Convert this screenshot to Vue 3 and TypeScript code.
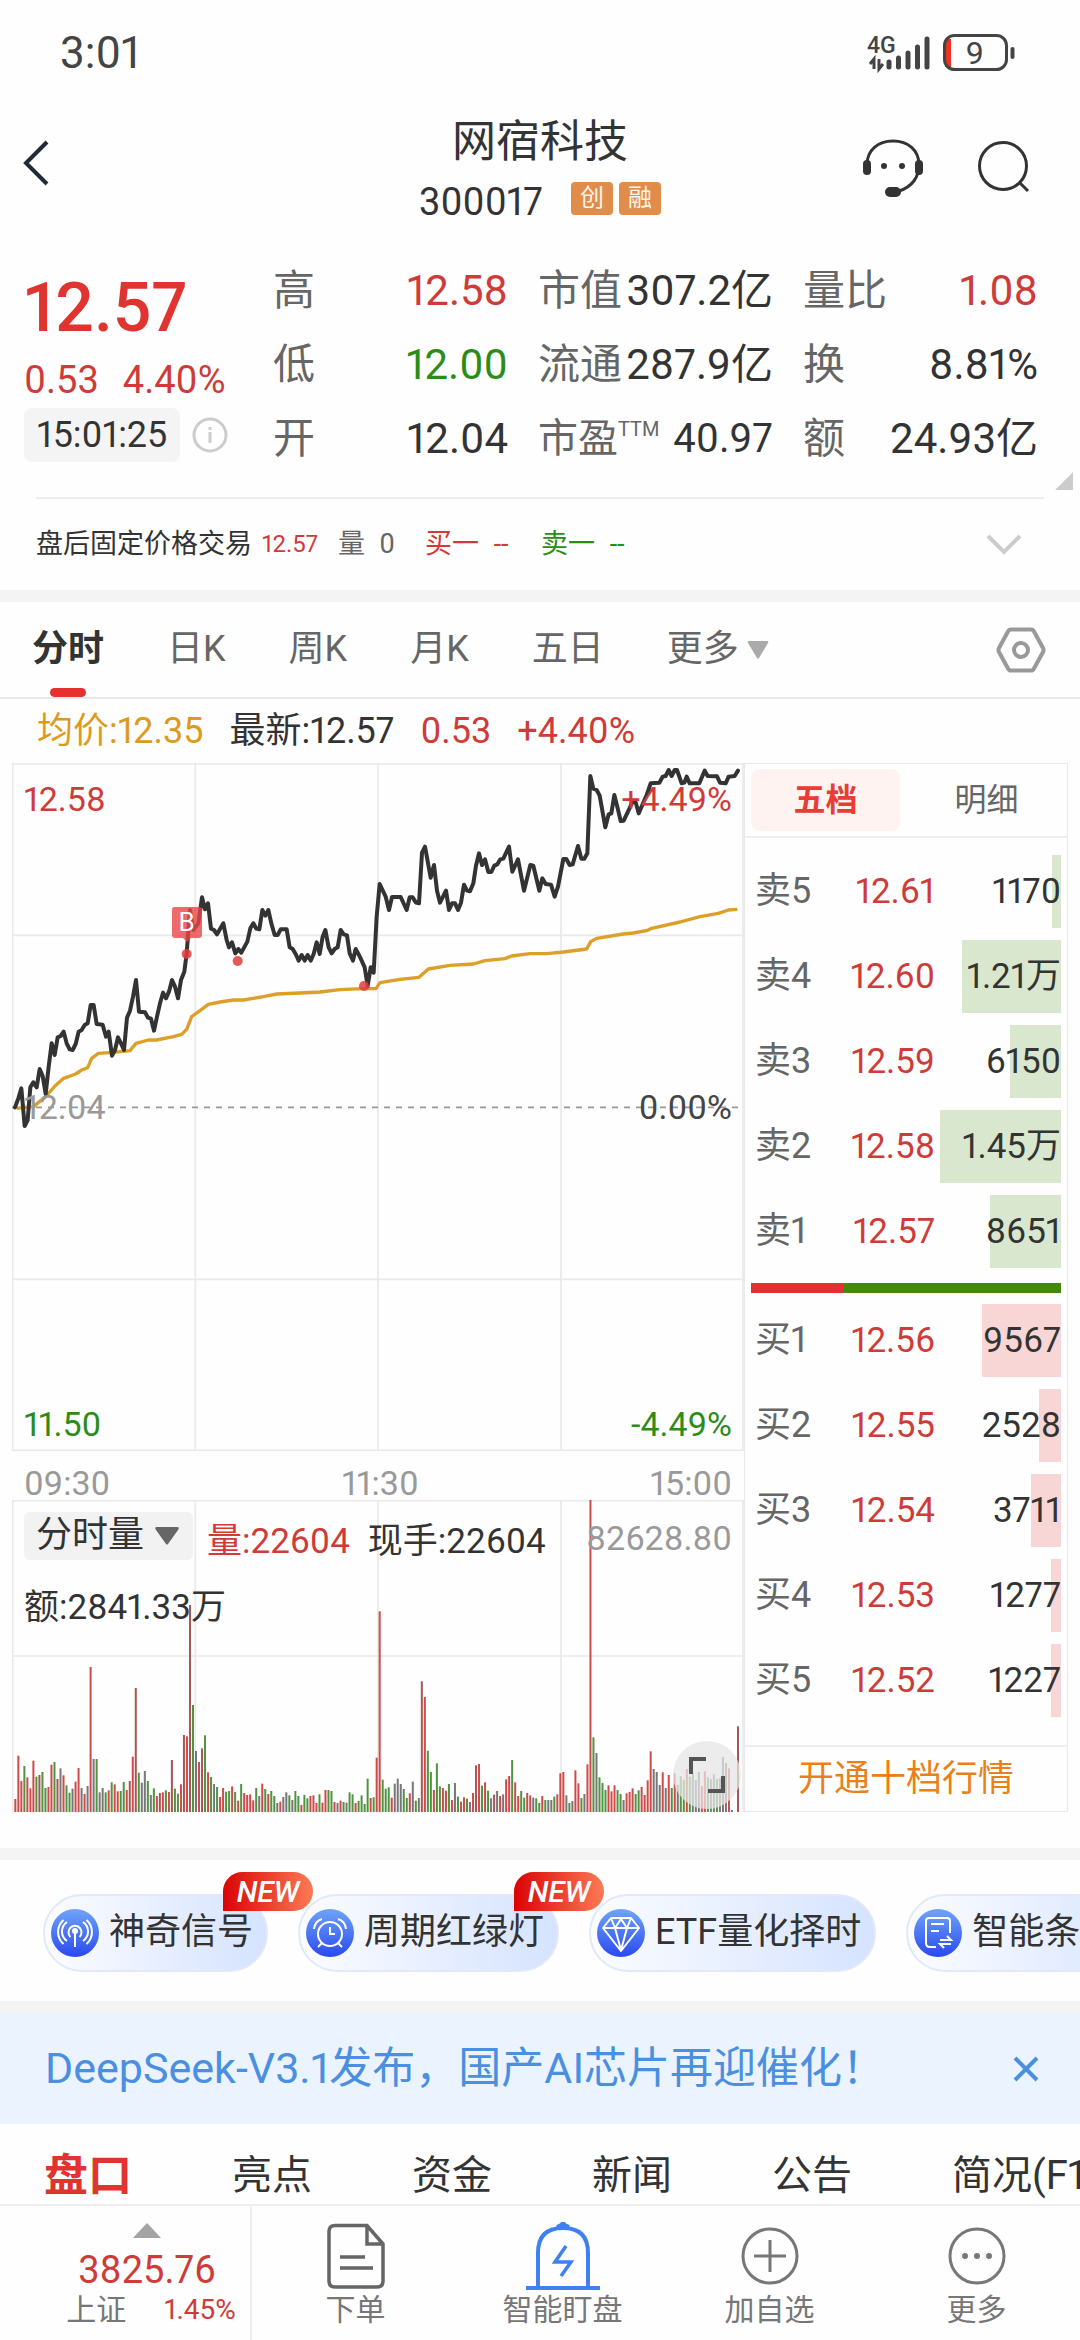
<script setup lang="ts">
import { ref } from 'vue'

interface Stat { label: string; sup?: string; value: string; unit?: string; tone?: 'up' | 'down' }
interface Level { name: string; price: string; volume: string; bar: number }

const stats: Stat[] = [
  { label: '高', value: '12.58', tone: 'up' },
  { label: '市值', value: '307.2', unit: '亿' },
  { label: '量比', value: '1.08', tone: 'up' },
  { label: '低', value: '12.00', tone: 'down' },
  { label: '流通', value: '287.9', unit: '亿' },
  { label: '换', value: '8.81%' },
  { label: '开', value: '12.04' },
  { label: '市盈', sup: 'TTM', value: '40.97' },
  { label: '额', value: '24.93', unit: '亿' },
]

const periods = ['分时', '日K', '周K', '月K', '五日']
const period = ref('分时')

// bar: share of the book width, in percent
const asks: Level[] = [
  { name: '卖5', price: '12.61', volume: '1170', bar: 3 },
  { name: '卖4', price: '12.60', volume: '1.21万', bar: 32 },
  { name: '卖3', price: '12.59', volume: '6150', bar: 16.5 },
  { name: '卖2', price: '12.58', volume: '1.45万', bar: 39 },
  { name: '卖1', price: '12.57', volume: '8651', bar: 23 },
]
const bids: Level[] = [
  { name: '买1', price: '12.56', volume: '9567', bar: 25.5 },
  { name: '买2', price: '12.55', volume: '2528', bar: 7 },
  { name: '买3', price: '12.54', volume: '3711', bar: 9.7 },
  { name: '买4', price: '12.53', volume: '1277', bar: 3.2 },
  { name: '买5', price: '12.52', volume: '1227', bar: 3.2 },
]

const priceLine = `45,1072 55,1045 64,1015 74,1128 83,1110 91,1012 100,997 110,1012 119,957 128,978 137,1032 146,950
155,880 164,915 173,862 182,858 191,845 200,880 209,898 218,900 227,882 236,845 245,840 254,825 263,820 272,765 281,765
290,822 308,824 318,860 326,845 336,917 345,900 354,862 363,880 372,900 381,803 390,782 399,740 408,690 417,785 435,787
444,803 453,806 462,842 471,800 480,760 489,728 498,745 507,725 516,690 525,710 534,745 543,690 553,665 560,610 570,480
580,540 595,520 606,442 615,478 624,460 633,536 642,540 651,553 670,520 680,570 687,592 696,577 706,610 715,597 724,608
742,575 751,535 760,520 769,536 778,538 787,480 796,497 805,480 814,520 824,555 833,555 842,538 860,538 869,592 878,597
887,612 896,632 905,615 914,632 923,615 932,632 941,612 950,577 959,612 968,560 976,540 986,592 995,610 1004,597 1013,592
1022,540 1031,553 1041,556 1049,610 1059,632 1067,597 1077,615 1085,632 1094,652 1103,708 1112,652 1121,668 1130,500
1139,402 1157,440 1167,480 1176,441 1202,441 1220,480 1229,442 1238,442 1248,458 1257,460 1266,308 1275,290 1292,383
1302,345 1311,422 1320,458 1338,422 1347,480 1356,460 1365,460 1374,480 1383,458 1392,404 1401,422 1410,424 1420,400
1428,347 1437,310 1446,345 1455,328 1465,366 1474,366 1483,347 1492,343 1501,328 1510,326 1527,290 1537,365 1554,328
1572,422 1591,345 1600,347 1618,422 1627,385 1637,402 1653,404 1664,440 1674,410 1690,327 1699,327 1709,345 1718,343
1734,288 1744,326 1753,326 1762,310 1771,78 1780,116 1790,120 1799,137 1816,232 1826,193 1834,190 1843,135 1853,175
1862,213 1871,212 1880,193 1898,155 1907,157 1916,190 1940,135 1952,100 1978,98 1988,80 1997,78 2006,60 2015,78 2024,60
2031,60 2045,100 2053,98 2060,80 2069,100 2098,100 2114,62 2123,78 2151,79 2160,98 2177,100 2186,80 2204,78 2214,62`

const averageLine = `50,1075 100,1070 137,1040 165,1008 191,985 227,972 245,960 263,953 275,925 295,910 340,907 390,902
408,880 445,870 470,870 520,860 545,853 560,838 575,800 600,782 625,763 660,756 700,750 730,750 790,740 830,732 900,729
960,726 1020,719 1090,716 1128,716 1140,698 1200,688 1257,682 1285,657 1350,646 1420,642 1455,632 1515,626 1535,618
1590,611 1640,611 1690,606 1760,597 1772,575 1790,565 1870,552 1900,549 1943,541 1955,535 2040,516 2100,500 2155,490
2185,480 2212,478`

// One token a minute: tone (r up, d strong up, g down, n flat) and the y of the bar's top; the base line is 1206.
const volumeSeries = `r1167 r1037 r1113 g1068 r1102 r1135 r1052 g1100 d1095 g1086 g1134 r1131 r1064 g1056 d1107 n1075
r1096 g1126 g1148 n1136 r1115 r1074 n1134 r1152 n1128 r771 n1047 g1047 n1147 n1134 g1147 r1141 g1117 r1123 r1144 g1143
g1116 r1140 d1113 r1040 d834 g1088 n1118 n1083 g1113 n1155 g1135 r1158 d1149 r1147 g1141 r1146 d1050 g1136 g1151 r1123
d975 r979 d585 g885 n1023 r1056 d1015 g976 r1087 g1101 n1122 g1131 r1161 r1134 g1145 g1143 r1129 g1146 r1172 g1122 r1149
r1155 r1153 r1171 g1134 n1158 r1121 g1137 r1152 g1143 g1158 n1179 r1175 n1161 n1147 g1156 n1170 g1143 g1158 r1185 g1155
g1165 r1158 r1156 r1179 g1153 r1178 r1140 g1140 g1143 r1176 n1179 r1172 g1176 n1178 g1147 g1153 r1179 g1173 g1156 g1182
g1106 r1164 g1162 r1043 r604 g1109 g1136 g1132 r1163 n1121 n1106 n1122 g1137 g1164 r1150 n1115 g1172 n1164 d814 r861
g1022 g1086 r1140 g1060 g1129 r1134 r1142 g1122 r1170 n1119 g1160 r1175 r1162 g1166 n1176 r1149 d1066 r1062 g1127 r1117
g1142 n1165 d1154 n1143 r1158 n1153 r1108 r1098 g1050 r1117 r1158 g1143 g1163 r1149 r1156 n1163 g1165 g1179 r1158 g1170
n1170 n1170 g1160 r1153 r1090 r1086 n1156 g1179 n1173 r1081 r1120 g1164 n1152 r1063 r270 g982 n1029 g1102 g1119 g1140
r1126 r1144 r1126 g1140 g1152 n1170 r1150 r1146 r1135 g1152 g1141 r1131 r1155 r1111 r1024 n1077 n1086 n1125 r1087 n1134
r1095 g1134 r1090 n1125 g1099 g1110 r1077 g1100 n1090 n1110 n1086 r1128 r1084 g1102 n1107 n1093 g1107 n1105 n1041 n1059
r1075 n1200 n1206 d949`

const tones: Record<string, string> = { r: '#d04a4a', d: '#a85555', g: '#4f9440', n: '#777777' }
const bars = volumeSeries.split(/\s+/).map((token, i, all) => {
  const top = Number(token.slice(1))
  return { x: 46 + (i * 2168) / (all.length - 1) - 3, y: top, h: 1206 - top, fill: tones[token[0]] }
})

const gridX = [38, 586, 1134, 1683, 2229]
const infoTabs = ['盘口', '亮点', '资金', '新闻', '公告', '简况(F10)']
const indicator = ref('分时量')
</script>

<template>
  <div class="app">
    <div class="status">
      <span class="clock">3:01</span>
      <svg class="signal" width="152" height="44" viewBox="864 30 152 44" fill="none" aria-hidden="true">
        <text x="867" y="52" font-size="23" font-weight="500" fill="#444">4G</text>
        <path d="M874 68V58l-4 5M879 58v10l4-5" stroke="#444" stroke-width="3" />
        <g stroke="#444" stroke-width="5" stroke-linecap="round">
          <path d="M889 61v5M898.500 57v9M908 52v14M917.500 46v20M927 38v28" />
        </g>
        <rect x="945" y="38" width="6" height="28" fill="#ee3324" />
        <rect x="944.500" y="34.500" width="62" height="34" rx="10" stroke="#444" stroke-width="3" />
        <rect x="1010.500" y="46" width="4" height="12" rx="2" fill="#444" />
        <text x="975" y="63" font-size="32" text-anchor="middle" fill="#444">9</text>
      </svg>
    </div>

    <header class="head">
      <button class="back" aria-label="返回">
        <svg width="28" height="46" viewBox="0 0 28 46" fill="none"><path d="M25 2 4 23l21 21" stroke="#1f2a3a" stroke-width="4" /></svg>
      </button>
      <div class="title">
        <h1>网宿科技</h1>
        <div class="code">
          <span>300017</span>
          <span class="tags"><i>创</i><i>融</i></span>
        </div>
      </div>
      <div class="tools">
        <button aria-label="客服">
          <svg width="62" height="62" viewBox="0 0 62 62" fill="none">
            <path d="M5 29C5 14 16 5 31 5s26 9 26 24c0 12-7 22-20 26" stroke="#333" stroke-width="3" />
            <rect x="1" y="24" width="8" height="15" rx="4" fill="#333" />
            <rect x="53" y="24" width="8" height="15" rx="4" fill="#333" />
            <circle cx="22" cy="30" r="3" fill="#333" /><circle cx="40" cy="30" r="3" fill="#333" />
            <rect x="23" y="51" width="16" height="10" rx="5" fill="#333" />
          </svg>
        </button>
        <button aria-label="搜索">
          <svg width="54" height="54" viewBox="0 0 54 54" fill="none">
            <circle cx="27" cy="26" r="23.500" stroke="#333" stroke-width="3" /><path d="m43 42 9 9" stroke="#333" stroke-width="3" />
          </svg>
        </button>
      </div>
    </header>

    <section class="quote">
      <div class="last">
        <strong>12.57</strong>
        <div class="change"><span>0.53</span><span>4.40%</span></div>
        <div class="stamp">
          <time>15:01:25</time>
          <button aria-label="说明">
            <svg width="36" height="36" viewBox="0 0 36 36" fill="none" stroke="#ccc">
              <circle cx="18" cy="18" r="16" stroke-width="3" /><path d="M18 15v11M18 10v3" stroke-width="3" />
            </svg>
          </button>
        </div>
      </div>
      <dl class="stats">
        <div v-for="s in stats" :key="s.label" :class="{ compact: s.sup }">
          <dt>{{ s.label }}<sup v-if="s.sup">{{ s.sup }}</sup></dt>
          <dd :class="s.tone">{{ s.value }}{{ s.unit }}</dd>
        </div>
      </dl>
      <span class="corner"></span>
    </section>

    <section class="after">
      <span class="name">盘后固定价格交易</span>
      <span class="up px">12.57</span>
      <span class="muted">量<span class="qty">0</span></span>
      <span class="up bid">买一<span class="qty">--</span></span>
      <span class="down">卖一<span class="qty">--</span></span>
      <button aria-label="展开">
        <svg width="36" height="22" viewBox="0 0 36 22" fill="none"><path d="m2 2 16 16L34 2" stroke="#ccc" stroke-width="4" /></svg>
      </button>
    </section>
    <div class="band"></div>

    <nav class="periods">
      <button v-for="p in periods" :key="p" :class="{ on: p === period }" @click="period = p">{{ p }}</button>
      <button class="more">更多<svg width="22" height="18" viewBox="0 0 22 18"><path d="M2 0h18q2 0 1 2L12 17q-1 1-2 0L1 2Q0 0 2 0z" fill="#aaa" /></svg></button>
      <button class="gear" aria-label="设置">
        <svg width="50" height="46" viewBox="0 0 50 46" fill="none" stroke="#999" stroke-width="4">
          <path d="M15 2.500h20q2 0 3 2L47 21q1 2 0 4L38 41.500q-1 2-3 2H15q-2 0-3-2L3 25q-1-2 0-4L12 4.500q1-2 3-2z" /><circle cx="25" cy="23" r="7" />
        </svg>
      </button>
    </nav>
    <div class="readout">
      <span class="avg">均价:12.35</span><span>最新:12.57</span><span class="up">0.53</span><span class="up">+4.40%</span>
    </div>

    <main class="board">
      <div class="charts">
        <div class="pane price">
          <svg viewBox="36 39 2196 2064" preserveAspectRatio="none" fill="none">
            <path v-for="x in gridX" :key="x" :d="`M${x} 39V2103`" stroke="#e9e9e9" stroke-width="5" />
            <path d="M36 42H2232M36 556H2232M36 1588H2232M36 2101H2232" stroke="#e9e9e9" stroke-width="5" />
            <path d="M36 1072H2214" stroke="#999" stroke-width="5" stroke-dasharray="18 18" />
            <polyline :points="averageLine" stroke="#dd9f27" stroke-width="10" stroke-linejoin="round" />
            <polyline :points="priceLine" stroke="#333" stroke-width="12" stroke-linejoin="round" stroke-linecap="round" />
            <g fill="#e23c3c" fill-opacity="0.85">
              <circle cx="560" cy="612" r="15" /><circle cx="713" cy="633" r="15" /><circle cx="1092" cy="708" r="15" />
            </g>
          </svg>
          <span class="mark">B</span>
          <div class="scale">
            <div class="up"><span>12.58</span><span>+4.49%</span></div>
            <div class="flat"><span>12.04</span><span>0.00%</span></div>
            <div class="down"><span>11.50</span><span>-4.49%</span></div>
          </div>
        </div>
        <div class="hours"><span>09:30</span><span>11:30</span><span>15:00</span></div>
        <div class="pane volume">
          <svg viewBox="36 270 2196 936" preserveAspectRatio="none" fill="none">
            <path v-for="x in gridX" :key="x" :d="`M${x} 270V1206`" stroke="#e9e9e9" stroke-width="5" />
            <path d="M36 272H2232M36 738H2232" stroke="#e9e9e9" stroke-width="5" />
            <rect v-for="(b, i) in bars" :key="i" :x="b.x" :y="b.y" width="6" :height="b.h" :fill="b.fill" />
          </svg>
          <div class="legend">
            <div class="line">
              <label class="pick">
                <select v-model="indicator" aria-label="副图指标"><option>分时量</option></select>
                <svg width="24" height="18" viewBox="0 0 24 18"><path d="M2 0h20q3 0 1 3L13 17q-1 1-2 0L1 3Q-1 0 2 0z" fill="#666" /></svg>
              </label>
              <span class="up">量:22604</span><span>现手:22604</span><span class="peak">82628.80</span>
            </div>
            <div class="line">额:2841.33万</div>
          </div>
          <button class="expand" aria-label="全屏">
            <svg width="68" height="68" viewBox="0 0 68 68" fill="none" stroke="#555" stroke-width="4"><path d="M18 33V18h15M35 50h15V35" /></svg>
          </button>
        </div>
      </div>

      <aside class="book">
        <div class="modes"><button class="on">五档</button><button>明细</button></div>
        <table class="levels asks">
          <tbody>
            <tr v-for="l in asks" :key="l.name">
              <th scope="row">{{ l.name }}</th><td class="up">{{ l.price }}</td>
              <td>{{ l.volume }}<i :style="{ width: l.bar + '%' }"></i></td>
            </tr>
          </tbody>
        </table>
        <div class="ratio"><i></i></div>
        <table class="levels bids">
          <tbody>
            <tr v-for="l in bids" :key="l.name">
              <th scope="row">{{ l.name }}</th><td class="up">{{ l.price }}</td>
              <td>{{ l.volume }}<i :style="{ width: l.bar + '%' }"></i></td>
            </tr>
          </tbody>
        </table>
        <a class="upgrade" href="#">开通十档行情</a>
      </aside>
    </main>
    <div class="band"></div>

    <section class="chips">
      <button>
        <svg width="48" height="48" viewBox="0 0 48 48" fill="none" stroke="#fff" stroke-width="2">
          <defs><linearGradient id="blue" x1="0" y1="0" x2="0" y2="1"><stop stop-color="#6fa4f8" /><stop offset="1" stop-color="#2a49f0" /></linearGradient></defs>
          <circle cx="24" cy="24" r="24" fill="url(#blue)" stroke="none" />
          <path d="M24 22v16M19.500 28a6.500 6.500 0 1 1 9 0M16 32a11.500 11.500 0 0 1 0-19M32 32a11.500 11.500 0 0 0 0-19M12.500 35a16 16 0 0 1 0-24M35.500 35a16 16 0 0 0 0-24" /><circle cx="24" cy="22" r="2" fill="#fff" />
        </svg>
        神奇信号<b>NEW</b>
      </button>
      <button>
        <svg width="48" height="48" viewBox="0 0 48 48" fill="none" stroke="#fff" stroke-width="2">
          <circle cx="24" cy="24" r="24" fill="url(#blue)" stroke="none" />
          <circle cx="24" cy="25" r="12" /><path d="M24 18v7h5M16 34l-4 4M32 34l4 4M8 20q1-8 8-10M40 20q-1-8-8-10" />
        </svg>
        周期红绿灯<b>NEW</b>
      </button>
      <button>
        <svg width="48" height="48" viewBox="0 0 48 48" fill="none" stroke="#fff" stroke-width="2" stroke-linejoin="round">
          <circle cx="24" cy="24" r="24" fill="url(#blue)" stroke="none" />
          <path d="M14 9h20l8 10-18 23L6 19zM6 19h36M14 9l4 10 6 22 6-22 4-10M18 19l6-9 6 9" />
        </svg>
        ETF量化择时
      </button>
      <button>
        <svg width="48" height="48" viewBox="0 0 48 48" fill="none" stroke="#fff" stroke-width="2">
          <circle cx="24" cy="24" r="24" fill="url(#blue)" stroke="none" />
          <path d="M22 38h-6q-4 0-4-4V12q0-3 3-3h18q3 0 3 3v12M17 15h13M17 22h8M26 31h11l-4-4M37 35H26l4 4" />
        </svg>
        智能条件单
      </button>
    </section>
    <div class="band"></div>

    <div class="notice">
      <a href="#">DeepSeek-V3.1发布，国产AI芯片再迎催化！</a>
      <button aria-label="关闭"><svg width="26" height="26" viewBox="0 0 26 26"><path d="m2 2 22 22M24 2 2 24" stroke="#4a8fe0" stroke-width="4" /></svg></button>
    </div>

    <nav class="info">
      <button v-for="(t, i) in infoTabs" :key="t" :class="{ on: i === 0 }">{{ t }}</button>
    </nav>

    <footer class="dock">
      <a class="index" href="#">
        <svg width="28" height="15" viewBox="0 0 28 15"><path d="M14 0 28 15H0z" fill="#a3a3a3" /></svg>
        <strong>3825.76</strong>
        <span class="sub"><span>上证</span><span class="up">1.45%</span></span>
      </a>
      <a href="#">
        <svg width="76" height="72" viewBox="0 0 76 72" fill="none" stroke="#666" stroke-width="3.500">
          <path d="M17 5.500h32L65 24v37q0 6-6 6H17q-6 0-6-6V11.500q0-6 6-6z" /><path d="M49 6v18h15M22 37h25M22 48h33" />
        </svg>下单
      </a>
      <a href="#">
        <svg width="76" height="72" viewBox="0 0 76 72" fill="none" stroke="#3e80ee" stroke-width="4">
          <path d="M13 66V33Q13 8 38 8t25 25v33M1 68h74" /><path d="M32 7q6-2 6-5 0 3 6 5z" /><path d="m41 26-11 16h16L36 56" stroke-width="3.500" />
        </svg>智能盯盘
      </a>
      <a href="#">
        <svg width="76" height="72" viewBox="0 0 76 72" fill="none" stroke="#777" stroke-width="3">
          <circle cx="38" cy="36" r="27" /><path d="M22 36h32M38 20v32" />
        </svg>加自选
      </a>
      <a href="#">
        <svg width="76" height="72" viewBox="0 0 76 72" fill="none" stroke="#777" stroke-width="3">
          <circle cx="38" cy="36" r="27" /><g fill="#777" stroke="none"><circle cx="26" cy="36" r="3" /><circle cx="38" cy="36" r="3" /><circle cx="50" cy="36" r="3" /></g>
        </svg>更多
      </a>
    </footer>
  </div>
</template>

<style>
body { margin: 0; background: #fff; }
</style>

<style scoped>
.app {
  display: flex;
  flex-direction: column;
  min-height: 100vh;
  overflow: hidden;
  background: #fefefe;
  color: #333;
  font-family: Roboto, "Noto Sans CJK SC", sans-serif;
  font-variant-numeric: proportional-nums;
  font-size: 36px;
  line-height: 1.2;
}
.app * { box-sizing: border-box; }
button, select {
  margin: 0;
  padding: 0;
  border: 0;
  background: none;
  color: inherit;
  font: inherit;
}
a { color: inherit; text-decoration: none; }
i { font-style: normal; }
svg { display: block; flex: none; }
.up { color: #cf3b38; }
.down { color: #2b8c18; }
.muted { color: #666; }
.band { height: 12px; background: #f4f4f4; }

.status {
  display: flex;
  align-items: center;
  justify-content: space-between;
  height: 106px;
  padding: 0 64px 0 60px;
}
.clock { color: #444; font-size: 44px; }

.head {
  display: grid;
  grid-template-columns: 1fr auto 1fr;
  height: 148px;
}
.back { justify-self: start; align-self: start; padding: 34px 0 0 22px; }
.title { display: flex; flex-direction: column; align-items: center; }
h1 { margin: 8px 0 0; font-size: 44px; font-weight: 400; line-height: 56px; }
.code { display: flex; align-items: center; gap: 28px; margin-top: 8px; font-size: 38px; line-height: 48px; }
.tags { display: flex; gap: 6px; padding-bottom: 8px; }
.tags i {
  width: 42px;
  border-radius: 4px;
  background: #e08d4b;
  color: #fff6e8;
  font-size: 24px;
  line-height: 33px;
  text-align: center;
}
.tools { display: flex; justify-content: flex-end; gap: 52px; padding: 30px 50px 0 0; height: 92px; align-items: center; }

.quote {
  position: relative;
  display: grid;
  grid-template-columns: 249px 1fr;
  min-height: 243px;
  padding: 0 42px 0 24px;
}
.last { padding-top: 16px; }
.last strong { display: block; color: #e03431; font-size: 68px; font-weight: 500; line-height: 76px; }
.change { display: flex; gap: 24px; margin-top: 12px; color: #cf3b38; font-size: 38px; line-height: 44px; }
.stamp { display: flex; align-items: center; gap: 12px; margin-top: 6px; }
.stamp time { padding: 0 13px; border-radius: 8px; background: #f4f4f4; line-height: 54px; }
.stats {
  display: grid;
  grid-template-columns: repeat(3, 1fr);
  column-gap: 30px;
  align-content: start;
  margin: 0;
  font-size: 42px;
  line-height: 74px;
}
.stats div { display: flex; justify-content: space-between; height: 74px; white-space: nowrap; }
.stats dt { color: #666; }
.stats dd { margin: 0; }
.stats .up { color: #cf3b38; }
.stats .compact { font-size: 40px; }
.stats sup { font-size: 20px; line-height: 20px; vertical-align: 16px; }
.corner {
  position: absolute;
  right: 7px;
  bottom: 7px;
  border-bottom: 18px solid #ccc;
  border-left: 18px solid transparent;
}

.after {
  display: flex;
  align-items: center;
  height: 93px;
  margin: 0 36px;
  border-top: 2px solid #eee;
  font-size: 27px;
}
.after .px { margin: 0 20px 0 10px; font-size: 24px; }
.after .bid { margin: 0 26px 0 24px; }
.after .qty { display: inline-block; min-width: 28px; margin-left: 8px; text-align: center; }
.after button { margin: 0 22px 0 auto; }

.periods {
  display: flex;
  align-items: stretch;
  gap: 63px;
  height: 97px;
  padding: 0 34px 0 32px;
  border-bottom: 2px solid #e8e8e8;
  color: #666;
}
.periods button { position: relative; white-space: nowrap; }
.periods .on { color: #333; font-weight: 700; }
.periods .on::after {
  content: "";
  position: absolute;
  bottom: 0;
  left: 18px;
  width: 36px;
  height: 9px;
  border-radius: 5px;
  background: #e5302d;
}
.periods .more { display: flex; align-items: center; gap: 8px; }
.periods .gear { margin-left: auto; }

.readout { display: flex; gap: 26px; padding-left: 37px; line-height: 64px; height: 64px; }
.avg { color: #dd9a1c; }

.board { display: grid; grid-template-columns: minmax(0, 1fr) 324px; padding: 0 12px 36px; }
.pane { position: relative; display: grid; }
.pane > svg { grid-area: 1 / 1; width: 100%; height: 100%; }
.price { height: 688px; }
.scale {
  grid-area: 1 / 1;
  display: grid;
  grid-template-rows: 1fr auto 1fr;
  padding: 0 12px;
  font-size: 34px;
  line-height: 44px;
  z-index: 1;
}
.scale div { display: flex; justify-content: space-between; }
.scale .up { padding-top: 14px; }
.scale .down { align-items: flex-end; padding-bottom: 5px; }
.scale .flat { color: #444; }
.scale .flat span:first-child { color: #999; }
.mark {
  position: absolute;
  top: 21%;
  left: 21.800%;
  width: 30px;
  border-radius: 3px;
  background: rgba(232, 70, 70, 0.8);
  color: #fff;
  font-size: 26px;
  line-height: 31px;
  text-align: center;
}
.mark::after {
  content: "";
  position: absolute;
  top: 100%;
  left: 11px;
  border: 4px solid transparent;
  border-top-color: rgba(232, 70, 70, 0.8);
}
.hours { display: flex; justify-content: space-between; height: 49px; padding: 8px 12px 0; color: #999; font-size: 34px; line-height: 48px; }
.volume { height: 312px; }
.legend { grid-area: 1 / 1; padding: 12px; z-index: 1; }
.line { display: flex; align-items: center; gap: 14px; height: 60px; margin-bottom: 6px; font-size: 35px; white-space: nowrap; }
.pick { display: flex; align-items: center; gap: 10px; height: 48px; margin-bottom: 12px; padding: 0 14px 0 12px; border-radius: 6px; background: #f2f2f2; }
.pick select { appearance: none; font-size: 36px; }
.line .up { margin-right: 4px; }
.peak { margin: 0 0 8px auto; color: #999; font-size: 34px; }
.expand { position: absolute; right: 3px; bottom: 3px; border-radius: 50%; background: rgba(230, 230, 230, 0.75); z-index: 2; }

.book { display: flex; flex-direction: column; border: 1px solid #e9e9e9; }
.modes { display: grid; grid-template-columns: 149px 1fr; gap: 12px; padding: 5px 6px; border-bottom: 2px solid #eee; color: #666; font-size: 32px; line-height: 62px; }
.modes button { border-radius: 8px; }
.modes .on { background: #fff3f2; color: #e83c34; font-weight: 700; }
.levels { width: 310px; margin: 0 6px; border-collapse: collapse; table-layout: fixed; }
.asks { margin-top: 11px; }
.levels tr { position: relative; height: 85px; isolation: isolate; }
.levels th { width: 76px; padding: 0 0 0 4px; color: #666; font-weight: 400; text-align: left; }
.levels td { padding: 0; font-size: 35px; text-align: right; }
.levels td.up { width: 108px; }
.levels td i { position: absolute; top: 6px; right: 0; height: 73px; background: #d9e7ce; z-index: -1; }
.bids td i { background: #f9d6d6; }
.ratio { height: 10px; margin: 9px 6px 5px; background: #43870b; }
.ratio i { display: block; width: 30%; height: 100%; background: #e33030; }
.upgrade { margin-top: auto; border-top: 2px solid #eee; color: #ec8018; line-height: 64px; text-align: center; }

.chips { display: flex; gap: 30px; padding: 34px 0 29px 43px; }
.chips button {
  position: relative;
  display: flex;
  flex: none;
  align-items: center;
  gap: 10px;
  height: 78px;
  padding: 0 13px 0 6px;
  border: 2px solid #e1e9f8;
  border-radius: 39px;
  background: linear-gradient(90deg, #fbfcff, #d5e3ff);
  white-space: nowrap;
}
.chips b {
  position: absolute;
  top: -24px;
  right: -47px;
  width: 90px;
  border-radius: 20px 20px 20px 0;
  background: linear-gradient(90deg, #d90404, #fc7a55);
  color: #fff;
  font-size: 30px;
  font-style: italic;
  font-weight: 500;
  line-height: 39px;
  z-index: 1;
}

.notice {
  display: flex;
  align-items: center;
  justify-content: space-between;
  height: 111px;
  padding: 0 41px 0 45px;
  background: #eaf3fe;
  color: #4a8fe0;
  font-size: 43px;
  white-space: nowrap;
}

.info { display: flex; gap: 100px; height: 80px; padding: 22px 0 0 44px; font-size: 40px; line-height: 60px; white-space: nowrap; }
.info button { flex: none; }
.info .on { color: #e03431; font-size: 44px; font-weight: 700; }

.dock { display: flex; flex: 1; margin-top: auto; border-top: 2px solid #eee; color: #777; font-size: 30px; line-height: 36px; }
.dock a { display: flex; flex: 1; flex-direction: column; align-items: center; padding-top: 14px; }
.dock .index { flex: none; width: 252px; padding: 17px 0 0 44px; border-right: 2px solid #eee; }
.index strong { margin-top: 10px; color: #cf3b38; font-size: 38px; font-weight: 400; line-height: 44px; }
.sub { display: flex; gap: 38px; padding-left: 8px; }
.sub .up { font-size: 28px; }
</style>
